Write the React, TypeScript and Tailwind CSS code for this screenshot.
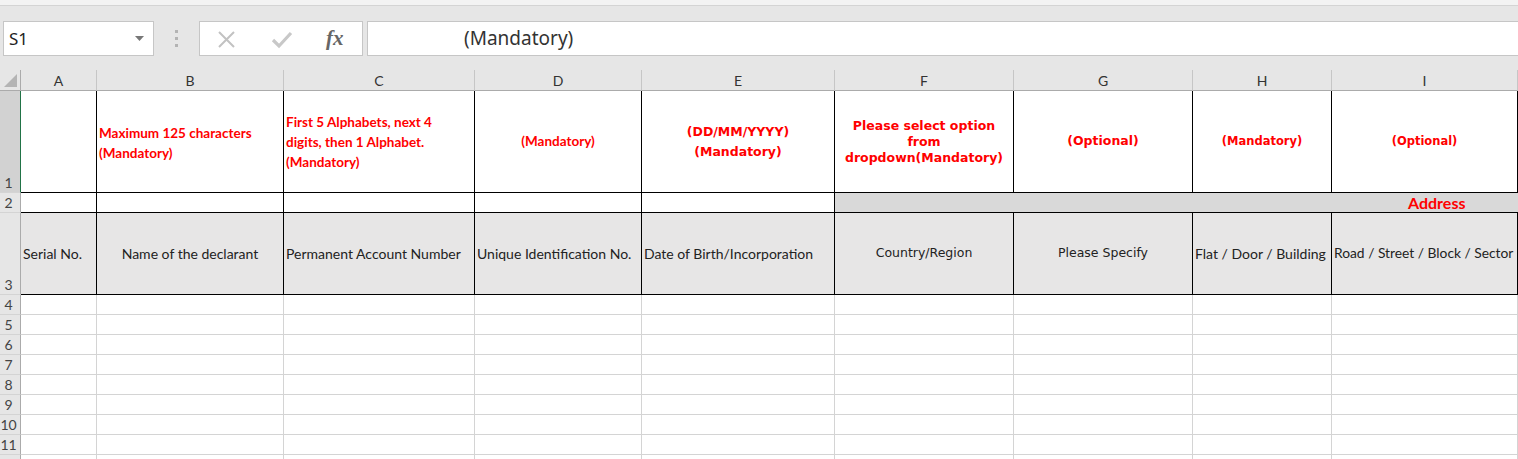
import React from "react";

const CAL = "font-[family-name:Lato,sans-serif]";
const TAH = "font-[family-name:'DejaVu_Sans',sans-serif]";

function RowHead({ n, selected, hideNum }: { n: number; selected?: boolean; hideNum?: boolean }) {
  return (
    <div
      className={`flex items-end justify-center pr-[3px] pb-[1px] border-b border-[#d4d4d4] text-[14px] leading-[16px] text-[#444] ${
        selected ? "bg-[#d2d2d2] border-r border-r-[#217346]" : "bg-[#e6e6e6] border-r border-r-[#ababab]"
      }`}
    >
      {hideNum ? null : n}
    </div>
  );
}

const letters = ["A", "B", "C", "D", "E", "F", "G", "H", "I"];

export default function App() {
  const blk = "border-r border-b border-black";
  return (
    <div className={`w-[1518px] h-[459px] overflow-hidden bg-white ${CAL}`}>
      {/* top strip */}
      <div className="h-[6px] bg-[#f3f3f3] border-b border-[#d4d4d4]" />
      {/* formula bar area */}
      <div className="h-[64px] bg-[#e6e6e6] pt-[15px] pl-[3px] flex items-start">
        <div className="w-[151px] h-[35px] bg-white border border-[#c6c6c6] flex items-center justify-between pl-[5px] pr-[9px]">
          <span className="font-[family-name:'Noto_Sans',sans-serif] text-[17px] text-[#222]">S1</span>
          <svg width="9" height="5" viewBox="0 0 9 5">
            <path d="M0 0 L9 0 L4.5 5 Z" fill="#777" />
          </svg>
        </div>
        <div className="w-[45px] h-[35px] flex flex-col items-center justify-center gap-[4px]">
          <span className="w-[3px] h-[3px] bg-[#b3b3b3]" />
          <span className="w-[3px] h-[3px] bg-[#b3b3b3]" />
          <span className="w-[3px] h-[3px] bg-[#b3b3b3]" />
        </div>
        <div className="w-[164px] h-[35px] bg-white border border-[#c6c6c6] flex items-center pl-[17px]">
          <svg width="19" height="19" viewBox="0 0 19 19" className="mt-[1px]">
            <path d="M2 2 L17 17 M17 2 L2 17" stroke="#c2c2c2" strokeWidth="2" />
          </svg>
          <svg width="22" height="18" viewBox="0 0 22 18" className="ml-[35px] mt-[2px]">
            <path d="M2 9 L8 15 L20 2" stroke="#c8c8c8" strokeWidth="3.2" fill="none" />
          </svg>
          <span className="ml-[33px] font-[family-name:'Liberation_Serif',serif] italic font-bold text-[21px] text-[#666] leading-none">
            fx
          </span>
        </div>
        <div className="ml-[4px] flex-1 h-[35px] bg-white border border-[#c6c6c6] border-r-0 flex items-center pl-[96px]">
          <span className="font-[family-name:'Noto_Sans',sans-serif] text-[19px] text-[#333]">(Mandatory)</span>
        </div>
      </div>

      {/* grid */}
      <div className="grid grid-cols-[21px_76px_187px_191px_167px_193px_179px_179px_139px_1fr] grid-rows-[21px_102px_20px_82px_repeat(9,20px)] text-[14px]">
        {/* column header row */}
        <div className="relative bg-[#e6e6e6] border-r border-b border-[#ababab]">
          <svg width="13" height="13" viewBox="0 0 13 13" className="absolute right-[3px] bottom-[3px]">
            <path d="M13 0 L13 13 L0 13 Z" fill="#b4b4b4" />
          </svg>
        </div>
        {letters.map((l) => (
          <div
            key={l}
            className="bg-[#e6e6e6] border-b border-b-[#ababab] border-r border-r-[#c6c6c6] flex items-end justify-center text-[#333] leading-[18px]"
          >
            {l}
          </div>
        ))}

        {/* row 1 */}
        <RowHead n={1} selected />
        <div className={blk} />
        <div className={`${blk} flex items-center pl-[2px] pt-[3px] font-bold text-[13.5px] leading-[20px] text-[#ff0000]`}>
          <div>
            Maximum 125 characters
            <br />
            (Mandatory)
          </div>
        </div>
        <div className={`${blk} flex items-center pl-[2px] font-bold text-[13.5px] leading-[20px] text-[#ff0000]`}>
          <div>
            First 5 Alphabets, next 4
            <br />
            digits, then 1 Alphabet.
            <br />
            (Mandatory)
          </div>
        </div>
        <div className={`${blk} flex items-center justify-center font-bold text-[13.5px] text-[#ff0000]`}>(Mandatory)</div>
        <div className={`${blk} flex items-center justify-center text-center ${TAH} font-bold text-[12.5px] leading-[20px] text-[#ff0000]`}>
          <div>
            (DD/MM/YYYY)
            <br />
            (Mandatory)
          </div>
        </div>
        <div className={`${blk} flex items-center justify-center text-center ${TAH} font-bold text-[12.5px] leading-[16px] text-[#ff0000]`}>
          <div>
            Please select option
            <br />
            from
            <br />
            dropdown(Mandatory)
          </div>
        </div>
        <div className={`${blk} flex items-center justify-center ${TAH} font-bold text-[12.5px] text-[#ff0000]`}>(Optional)</div>
        <div className={`${blk} flex items-center justify-center ${TAH} font-bold text-[11.5px] text-[#ff0000]`}>(Mandatory)</div>
        <div className={`${blk} flex items-center justify-center ${TAH} font-bold text-[11.5px] text-[#ff0000]`}>(Optional)</div>

        {/* row 2 */}
        <RowHead n={2} />
        <div className={blk} />
        <div className={blk} />
        <div className={blk} />
        <div className={blk} />
        <div className={blk} />
        <div className="col-span-4 bg-[#d9d9d9] border-b border-black flex items-center pl-[573px] font-bold text-[16px] text-[#ff0000] leading-none">
          Address
        </div>

        {/* row 3 */}
        <RowHead n={3} />
        <div className={`${blk} bg-[#e7e6e6] flex items-center pl-[2px] text-[#222]`}>Serial No.</div>
        <div className={`${blk} bg-[#e7e6e6] flex items-center justify-center text-[#222]`}>Name of the declarant</div>
        <div className={`${blk} bg-[#e7e6e6] flex items-center pl-[2px] text-[#222] whitespace-nowrap overflow-hidden`}>
          Permanent Account Number
        </div>
        <div className={`${blk} bg-[#e7e6e6] flex items-center pl-[2px] text-[#222] whitespace-nowrap overflow-hidden`}>
          Unique Identification No.
        </div>
        <div className={`${blk} bg-[#e7e6e6] flex items-center pl-[2px] text-[#222] whitespace-nowrap overflow-hidden`}>
          Date of Birth/Incorporation
        </div>
        <div className={`${blk} bg-[#e7e6e6] flex items-center justify-center ${TAH} text-[12.5px] text-[#222]`}>Country/Region</div>
        <div className={`${blk} bg-[#e7e6e6] flex items-center justify-center ${TAH} text-[12.5px] text-[#222]`}>Please Specify</div>
        <div className={`${blk} bg-[#e7e6e6] flex items-center pl-[2px] text-[#222] whitespace-nowrap overflow-hidden`}>
          Flat / Door / Building
        </div>
        <div className={`${blk} bg-[#e7e6e6] flex items-center pl-[2px] text-[13.8px] text-[#222] whitespace-nowrap overflow-hidden`}>
          Road / Street / Block / Sector
        </div>

        {/* rows 4-12 */}
        {[4, 5, 6, 7, 8, 9, 10, 11, 12].map((n) => (
          <React.Fragment key={n}>
            <RowHead n={n} hideNum={n === 12} />
            {letters.map((l) => (
              <div key={l} className="border-r border-b border-[#d4d4d4]" />
            ))}
          </React.Fragment>
        ))}
      </div>
    </div>
  );
}
